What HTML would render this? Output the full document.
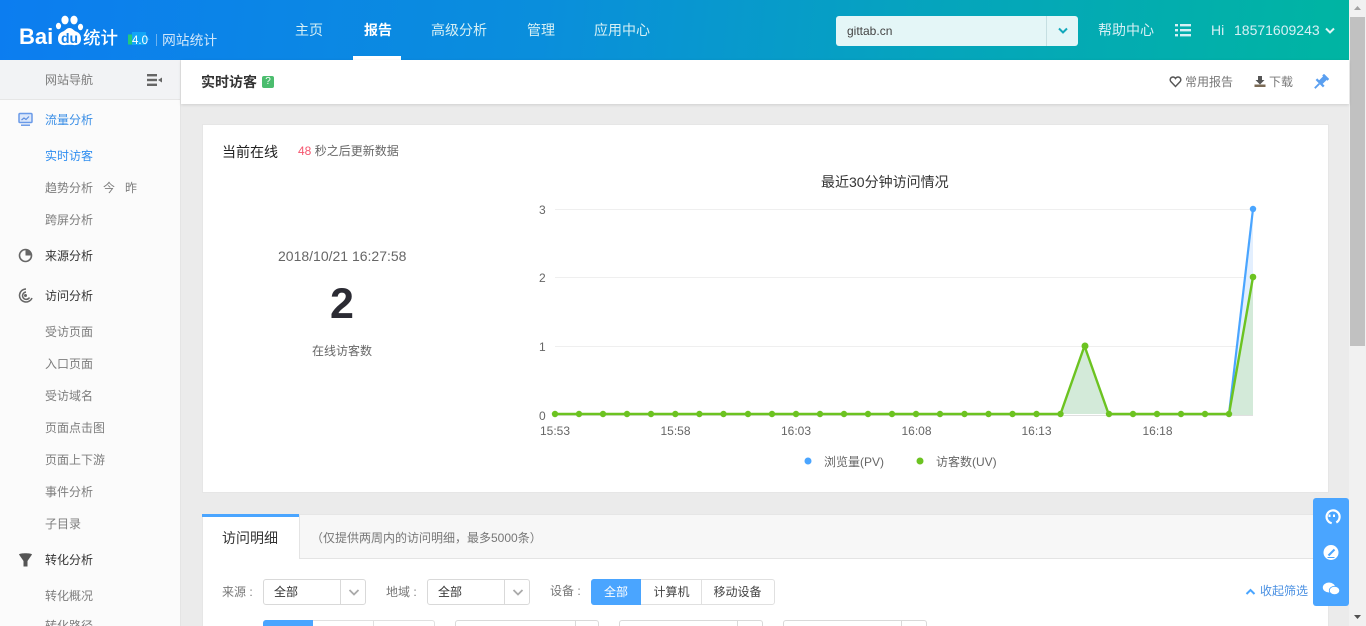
<!DOCTYPE html>
<html lang="zh"><head><meta charset="utf-8"><title>百度统计</title>
<style>
*{box-sizing:border-box}
html,body{margin:0;padding:0;width:1366px;height:626px;overflow:hidden;background:#ebebeb;font-family:"Liberation Sans","Noto Sans CJK SC",sans-serif;font-size:12px;color:#666}
#w{position:relative;width:1366px;height:626px;overflow:hidden;background:#ebebeb}
.a{position:absolute;white-space:nowrap;line-height:16px}
.hd{position:absolute;left:0;top:0;width:1349px;height:60px;background:linear-gradient(97deg,#0c7df0 0%,#0a8edc 40%,#05a5bc 70%,#00b5a2 100%)}
.nav{color:#d6f0f5;font-size:14px}
.side{position:absolute;left:0;top:60px;width:181px;height:566px;background:#fbfbfb;border-right:1px solid #e4e4e4}
.sh{position:absolute;left:0;top:60px;width:180px;height:40px;background:#f2f3f5;border-bottom:1px solid #e6e6e6}
.s{color:#7d7d7d;left:45px;font-size:12px}
.m{color:#333;left:45px;font-size:12px}
.top{position:absolute;left:181px;top:60px;width:1168px;height:44px;background:#fff;box-shadow:0 1px 3px rgba(0,0,0,.12)}
.card{position:absolute;left:202px;top:124px;width:1127px;height:369px;background:#fff;border:1px solid #e6e6e6}
.card2{position:absolute;left:202px;top:514px;width:1127px;height:112px;background:#fff;border:1px solid #e6e6e6;border-bottom:0}
.sel{position:absolute;height:26px;background:#fff;border:1px solid #d9d9d9;border-radius:3px;color:#333;font-size:12px;line-height:24px;padding-left:10px}
.sel i{position:absolute;top:0;bottom:0;width:1px;background:#d9d9d9}
.sel svg{position:absolute;top:8px}
.seg{position:absolute;height:26px;background:#fff;border:1px solid #e0e0e0;border-radius:3px}
.seg b{position:absolute;top:-1px;height:26px;background:#4aa5ff;border-radius:3px 0 0 3px;color:#fff;font-weight:400;text-align:center;line-height:26px;font-size:12px}
.seg i{position:absolute;top:0;bottom:0;width:1px;background:#e0e0e0}
.seg span{position:absolute;top:0;text-align:center;line-height:24px;color:#444;font-size:12px}
</style></head><body><div id="w">
<div class="hd"></div>

<!-- logo -->
<div class="a" style="left:19px;top:24px;color:#fff;font-size:22px;font-weight:700;line-height:26px;letter-spacing:0">Bai</div>
<svg class="a" style="left:54px;top:14px" width="30" height="33" viewBox="0 0 30 33"><g fill="#fff"><ellipse cx="4.500" cy="12" rx="2.600" ry="3.200"/><ellipse cx="11" cy="6" rx="3.600" ry="4.400"/><ellipse cx="20" cy="6" rx="3.600" ry="4.400"/><ellipse cx="26.500" cy="13" rx="2.600" ry="3.200"/><path d="M15.500 14c-3 0-4 2.500-6.500 3.500S4 20 4 25s4 6.500 7.500 6c2-.3 6-.3 8 0 3.500 .5 7.500-1 7.500-6s-2.500-6.500-5-7.500-3.500-3.500-6.500-3.500z"/></g><text x="15.500" y="29" text-anchor="middle" fill="#1180ea" font-family="Liberation Sans" font-size="14" font-weight="700">du</text></svg>
<div class="a" style="left:83px;top:26px;color:#fff;font-size:17.500px;line-height:24px;font-weight:500">统计</div>
<svg class="a" style="left:128px;top:31px" width="24" height="16"><path d="M0 3.500h6v10H0z" fill="#22c97e"/><path d="M4 1h14v3l4 5-4 0v5H4z" fill="#12a5f5"/><text x="4" y="13" fill="#fff" font-family="Liberation Sans" font-size="11.500">4.0</text></svg>
<div class="a" style="left:156px;top:34px;width:1px;height:12px;background:#6db2f0"></div>
<div class="a nav" style="left:162px;top:33px;font-size:13.800px;color:#cfe6fa">网站统计</div>

<!-- nav -->
<div class="a nav" style="left:295px;top:22px">主页</div>
<div class="a" style="left:364px;top:22px;color:#fff;font-size:14px;font-weight:700">报告</div>
<div class="a" style="left:353px;top:56px;width:48px;height:4px;background:#fff"></div>
<div class="a nav" style="left:431px;top:22px">高级分析</div>
<div class="a nav" style="left:527px;top:22px">管理</div>
<div class="a nav" style="left:594px;top:22px">应用中心</div>
<div class="a" style="left:836px;top:16px;width:242px;height:30px;background:#e4f6f7;border-radius:3px"></div>
<div class="a" style="left:1046px;top:16px;width:1px;height:30px;background:#c5dfe2"></div>
<svg class="a" style="left:1056px;top:26px" width="14" height="10"><path d="M3 2.500l4 4 4-4" fill="none" stroke="#12a8bb" stroke-width="2"/></svg>
<div class="a" style="left:847px;top:23px;color:#444;font-size:12px">gittab.cn</div>
<div class="a nav" style="left:1098px;top:22px">帮助中心</div>
<svg class="a" style="left:1175px;top:23px" width="16" height="14"><g fill="#d6f0f5"><rect x="0" y="1" width="3" height="2.400"/><rect x="5" y="1" width="11" height="2.400"/><rect x="0" y="6" width="3" height="2.400"/><rect x="5" y="6" width="11" height="2.400"/><rect x="0" y="11" width="3" height="2.400"/><rect x="5" y="11" width="11" height="2.400"/></g></svg>
<div class="a nav" style="left:1211px;top:22px;word-spacing:1px">Hi&nbsp; 18571609243</div>
<svg class="a" style="left:1323px;top:26px" width="14" height="10"><path d="M3 2.500l4 4 4-4" fill="none" stroke="#e0f5f5" stroke-width="2"/></svg>

<!-- scrollbar -->
<div class="a" style="left:1349px;top:0;width:17px;height:626px;background:#f1f1f1"></div>
<div class="a" style="left:1350px;top:17px;width:15px;height:329px;background:#c1c1c1"></div>
<svg class="a" style="left:1349px;top:0" width="17" height="17"><path d="M5 10h7L8.500 6z" fill="#a3a3a3"/></svg>
<svg class="a" style="left:1349px;top:609px" width="17" height="17"><path d="M5 6h7l-3.500 4z" fill="#505050"/></svg>

<!-- sidebar -->
<div class="side"></div><div class="sh"></div>
<div class="a s" style="top:72px">网站导航</div>
<svg class="a" style="left:146px;top:73px" width="17" height="14"><g fill="#666"><rect x="1" y="1" width="10" height="2.400"/><rect x="1" y="5.800" width="10" height="2.400"/><rect x="1" y="10.600" width="10" height="2.400"/><path d="M16 4.500v5l-4-2.500z"/></g></svg>

<svg class="a" style="left:18px;top:112px" width="15" height="15"><rect x="1" y="1.500" width="13" height="9" rx="1" fill="#dbe7fb" stroke="#6a9ae8" stroke-width="1.500"/><path d="M3.500 8l2.500-2 2 1.500 3-3" fill="none" stroke="#5b8de0" stroke-width="1.200"/><path d="M3 13.200h9" stroke="#6a9ae8" stroke-width="1.500"/></svg>
<div class="a m" style="top:112px;color:#3a8ee6">流量分析</div>
<div class="a s" style="top:148px;color:#2f8ef0">实时访客</div>
<div class="a s" style="top:180px">趋势分析</div>
<div class="a s" style="left:103px;top:180px">今</div>
<div class="a s" style="left:125px;top:180px">昨</div>
<div class="a s" style="top:212px">跨屏分析</div>
<svg class="a" style="left:18px;top:248px" width="15" height="15"><circle cx="7.500" cy="7.500" r="6" fill="none" stroke="#666" stroke-width="1.600"/><path d="M7.500 1.500a6 6 0 0 1 6 6h-6z" fill="#666"/></svg>
<div class="a m" style="top:248px">来源分析</div>
<svg class="a" style="left:18px;top:288px" width="15" height="15"><g fill="none" stroke="#666" stroke-width="1.500"><path d="M8 1a6.500 6.500 0 1 0 6 9"/><path d="M8 4a3.700 3.700 0 1 0 3.500 5.500"/></g><circle cx="7.500" cy="7.500" r="1.500" fill="#666"/></svg>
<div class="a m" style="top:288px">访问分析</div>
<div class="a s" style="top:324px">受访页面</div>
<div class="a s" style="top:356px">入口页面</div>
<div class="a s" style="top:388px">受访域名</div>
<div class="a s" style="top:420px">页面点击图</div>
<div class="a s" style="top:452px">页面上下游</div>
<div class="a s" style="top:484px">事件分析</div>
<div class="a s" style="top:516px">子目录</div>
<svg class="a" style="left:18px;top:552px" width="15" height="15"><path d="M1 2.500C1 .8 14 .8 14 2.500L9.500 9V14.500H5.500V9Z" fill="#555"/></svg>
<div class="a m" style="top:552px">转化分析</div>
<div class="a s" style="top:588px">转化概况</div>
<div class="a s" style="top:618px">转化路径</div>

<!-- top bar -->
<div class="top"></div>
<div class="a" style="left:201px;top:74px;color:#333;font-size:14px;font-weight:700">实时访客</div>
<div class="a" style="left:262px;top:76px;width:12px;height:12px;background:#4bbd6e;border-radius:2px;color:#fff;font-size:10px;line-height:12px;text-align:center">?</div>
<svg class="a" style="left:1169px;top:75px" width="13" height="13"><path d="M6.500 11.500L1.800 6.500C.3 4.500 1.800 2 4 2c1.200 0 2 .7 2.500 1.500C7 2.700 7.800 2 9 2c2.200 0 3.700 2.500 2.200 4.500z" fill="none" stroke="#555" stroke-width="1.400"/></svg>
<div class="a" style="left:1185px;top:74px;color:#777">常用报告</div>
<svg class="a" style="left:1254px;top:75px" width="12" height="13"><path d="M4 1h4v4h2.500L6 9.500 1.500 5H4z" fill="#555"/><rect x="0.500" y="9.500" width="11" height="2.500" fill="#7a6a55"/></svg>
<div class="a" style="left:1269px;top:74px;color:#777">下载</div>
<svg class="a" style="left:1312px;top:74px" width="17" height="17"><g transform="translate(8.500,8.500) rotate(45) scale(1.150)" fill="#5a9ff0"><rect x="-3.200" y="-7.500" width="6.400" height="2.200"/><rect x="-2.200" y="-5.500" width="4.400" height="5.500"/><rect x="-4.500" y="-.5" width="9" height="2"/><rect x="-.8" y="1.500" width="1.600" height="5.500"/></g></svg>

<!-- card 1 -->
<div class="card"></div>
<div class="a" style="left:222px;top:144px;color:#222;font-size:14px">当前在线</div>
<div class="a" style="left:298px;top:143px;color:#666;font-size:12px"><span style="color:#f5556e">48</span> 秒之后更新数据</div>
<div class="a" style="left:278px;top:248px;color:#666;font-size:14px">2018/10/21 16:27:58</div>
<div class="a" style="left:330px;top:279px;color:#2b2b33;font-size:43px;font-weight:700;line-height:50px">2</div>
<div class="a" style="left:312px;top:343px;color:#666;font-size:12px">在线访客数</div>
<div class="a" style="left:821px;top:174px;color:#333;font-size:14px">最近30分钟访问情况</div>

<svg class="a" style="left:520px;top:190px" width="760" height="290" viewBox="520 190 760 290" font-family="Liberation Sans" font-size="12" fill="#666">
<g stroke="#efefef" stroke-width="1"><path d="M555 209.500H1253M555 277.500H1253M555 346.500H1253"/></g>
<path d="M555 415.500H1253" stroke="#e0e0e0"/>
<path d="M1229 414L1253 209V415H1229z" fill="#e3effe"/>
<path d="M1060.500 414L1084.500 346 1108.600 414z" fill="#d3ead9"/>
<path d="M1229 414L1253 277V415H1229z" fill="#d3ead9"/>
<path d="M1229 414L1253 209" stroke="#4aa5ff" stroke-width="2.200" fill="none"/>
<path d="M555 414H1060.500L1084.500 346 1108.600 414H1229L1253 277" stroke="#6cc321" stroke-width="2.400" fill="none"/>
<circle cx="1253" cy="209" r="3.200" fill="#4aa5ff"/>
<g fill="#6cc321"><circle cx="555" cy="414" r="3.200"/><circle cx="579" cy="414" r="3.200"/><circle cx="603" cy="414" r="3.200"/><circle cx="627" cy="414" r="3.200"/><circle cx="651" cy="414" r="3.200"/><circle cx="675.300" cy="414" r="3.200"/><circle cx="699.400" cy="414" r="3.200"/><circle cx="723.500" cy="414" r="3.200"/><circle cx="748" cy="414" r="3.200"/><circle cx="772" cy="414" r="3.200"/><circle cx="796" cy="414" r="3.200"/><circle cx="820" cy="414" r="3.200"/><circle cx="844" cy="414" r="3.200"/><circle cx="868" cy="414" r="3.200"/><circle cx="892" cy="414" r="3.200"/><circle cx="916" cy="414" r="3.200"/><circle cx="940" cy="414" r="3.200"/><circle cx="964.500" cy="414" r="3.200"/><circle cx="988.500" cy="414" r="3.200"/><circle cx="1012.500" cy="414" r="3.200"/><circle cx="1036.500" cy="414" r="3.200"/><circle cx="1060.500" cy="414" r="3.200"/><circle cx="1085" cy="346" r="3.500"/><circle cx="1109" cy="414" r="3.200"/><circle cx="1133" cy="414" r="3.200"/><circle cx="1157" cy="414" r="3.200"/><circle cx="1181" cy="414" r="3.200"/><circle cx="1205" cy="414" r="3.200"/><circle cx="1229" cy="414" r="3.200"/><circle cx="1253" cy="277" r="3.300"/></g>
<g font-size="12"><text x="539" y="214">3</text><text x="539" y="282">2</text><text x="539" y="351">1</text><text x="539" y="420">0</text></g>
<g text-anchor="middle" font-size="12"><text x="555" y="435">15:53</text><text x="675.500" y="435">15:58</text><text x="796" y="435">16:03</text><text x="916.500" y="435">16:08</text><text x="1036.500" y="435">16:13</text><text x="1157.500" y="435">16:18</text></g>
<circle cx="808" cy="461" r="3.500" fill="#4aa5ff"/><circle cx="920" cy="461" r="3.500" fill="#6cc321"/>
<text x="824" y="466" font-family="Liberation Sans,Noto Sans CJK SC,sans-serif">浏览量(PV)</text>
<text x="936" y="466" font-family="Liberation Sans,Noto Sans CJK SC,sans-serif">访客数(UV)</text>
</svg>

<!-- card 2 -->
<div class="card2"></div>
<div class="a" style="left:299px;top:515px;width:1029px;height:44px;background:#f7f7f7;border-bottom:1px solid #e4e4e4;border-left:1px solid #e4e4e4"></div>
<div class="a" style="left:202px;top:514px;width:97px;height:3px;background:#4aa5ff"></div>
<div class="a" style="left:222px;top:530px;color:#333;font-size:14px">访问明细</div>
<div class="a" style="left:311px;top:530px;color:#777;font-size:12px">（仅提供两周内的访问明细，最多5000条）</div>

<div class="a" style="left:222px;top:584px;color:#777">来源 :</div>
<div class="sel" style="left:263px;top:579px;width:103px">全部<i style="left:76px"></i><svg style="left:83px" width="14" height="10"><path d="M2.500 2l4.500 4.500L11.500 2" fill="none" stroke="#aaa" stroke-width="1.800"/></svg></div>
<div class="a" style="left:386px;top:584px;color:#777">地域 :</div>
<div class="sel" style="left:427px;top:579px;width:103px">全部<i style="left:76px"></i><svg style="left:83px" width="14" height="10"><path d="M2.500 2l4.500 4.500L11.500 2" fill="none" stroke="#aaa" stroke-width="1.800"/></svg></div>
<div class="a" style="left:550px;top:583px;color:#777">设备 :</div>
<div class="seg" style="left:591px;top:579px;width:184px"><b style="left:-1px;width:50px">全部</b><span style="left:49px;width:61px">计算机</span><i style="left:109px"></i><span style="left:109px;width:73px">移动设备</span></div>
<svg class="a" style="left:1245px;top:587px" width="11" height="9"><path d="M1.500 7L5.500 3l4 4" fill="none" stroke="#4aa5ff" stroke-width="2"/></svg>
<div class="a" style="left:1260px;top:583px;color:#4a90e2">收起筛选</div>

<div class="seg" style="left:263px;top:620px;width:172px"><b style="left:-1px;width:50px"></b><i style="left:109px"></i></div>
<div class="sel" style="left:455px;top:620px;width:144px"><i style="left:119px"></i></div>
<div class="sel" style="left:619px;top:620px;width:144px"><i style="left:117px"></i></div>
<div class="sel" style="left:783px;top:620px;width:144px"><i style="left:117px"></i></div>

<!-- floating -->
<div class="a" style="left:1313px;top:498px;width:36px;height:108px;background:#4aa5ff;border-radius:3px"></div>
<svg class="a" style="left:1313px;top:498px" width="36" height="108">
<path d="M23.300 24.500A6.500 6.500 0 1 0 18.700 25.200" fill="none" stroke="#fff" stroke-width="2.200"/>
<rect x="15.500" y="16.500" width="2" height="2.500" fill="#fff"/><rect x="20" y="16.500" width="2" height="2.500" fill="#fff"/>
<circle cx="18" cy="54.500" r="7.500" fill="#fff"/><path d="M15.500 57.500l6-6" stroke="#4aa5ff" stroke-width="2"/><path d="M14.500 59.500h7" stroke="#4aa5ff" stroke-width="1"/>
<ellipse cx="16" cy="89.500" rx="6.200" ry="5" fill="#fff"/><ellipse cx="21.500" cy="92.500" rx="5.200" ry="4.200" fill="#fff" stroke="#4aa5ff" stroke-width=".8"/>
</svg>
</div></body></html>
